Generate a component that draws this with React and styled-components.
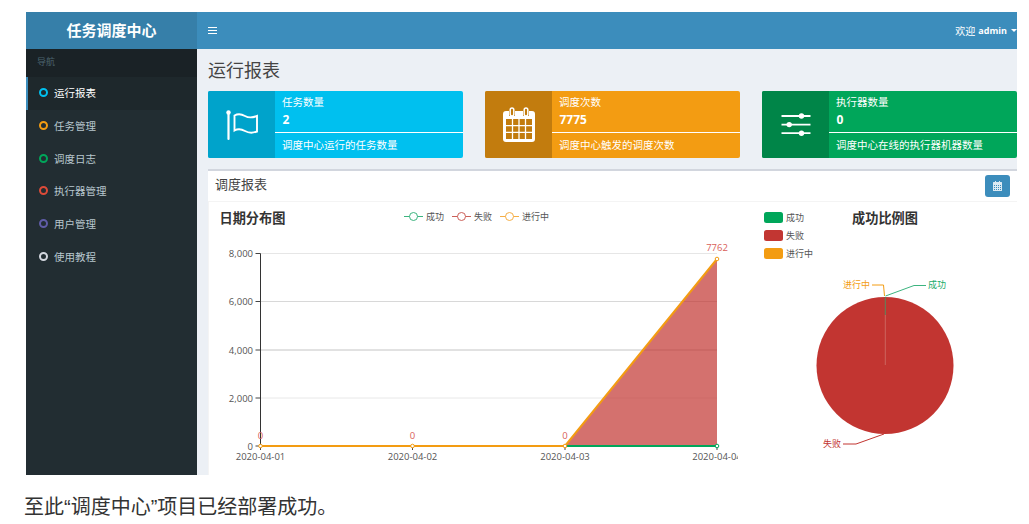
import React from 'react';
import styled, { createGlobalStyle } from 'styled-components';

const GlobalStyle = createGlobalStyle`
  html, body {
    margin: 0;
    padding: 0;
    background: #fff;
  }
  body {
    font-family: "Liberation Sans", "Noto Sans CJK SC", sans-serif;
  }
`;

const navItems = [
  { label: '运行报表', color: '#00c0ef', active: true },
  { label: '任务管理', color: '#f39c12' },
  { label: '调度日志', color: '#00a65a' },
  { label: '执行器管理', color: '#dd4b39' },
  { label: '用户管理', color: '#605ca8' },
  { label: '使用教程', color: '#d2d6de' },
];

const FlagIcon = () => (
  <svg width="36" height="36" viewBox="0 0 36 36" fill="none" stroke="#fff">
    <path d="M4.500 6v26" strokeWidth="2.200" strokeLinecap="round" />
    <circle cx="4.500" cy="5.500" r="2.200" fill="#fff" stroke="none" />
    <path d="M10.500 8.500c3.500-2 7-1.500 10.500 0.500s7 2 12 0v15.500c-5 2-8.500 1.500-12-0.500s-7-2.500-10.500-0.500z" strokeWidth="1.900" />
  </svg>
);

const CalendarIcon = () => (
  <svg width="32" height="36" viewBox="0 0 32 36">
    <path
      fill="#fff"
      fillRule="evenodd"
      d="M3 4h3v5h6V4h8v5h6V4h3a3 3 0 0 1 3 3v25a3 3 0 0 1-3 3H3a3 3 0 0 1-3-3V7a3 3 0 0 1 3-3zM3 12v20h26V12z"
    />
    <rect x="7.200" y="1" width="3.600" height="8" rx="1.800" fill="none" stroke="#fff" strokeWidth="1.500" />
    <rect x="21.200" y="1" width="3.600" height="8" rx="1.800" fill="none" stroke="#fff" strokeWidth="1.500" />
    <path d="M3 18.700h26M3 25.300h26M9.500 12v20M16 12v20M22.500 12v20" stroke="#fff" strokeWidth="1.300" />
  </svg>
);

const SlidersIcon = () => (
  <svg width="30" height="24" viewBox="0 0 30 24" stroke="#fff" fill="#fff">
    <path d="M0.500 3h29M0.500 11.600h29M0.500 20.200h29" strokeWidth="1.800" />
    <circle cx="20.500" cy="3" r="2.700" stroke="none" />
    <circle cx="8.200" cy="11.600" r="2.700" stroke="none" />
    <circle cx="20.500" cy="20.200" r="2.700" stroke="none" />
  </svg>
);

const stats = [
  { title: '任务数量', value: '2', desc: '调度中心运行的任务数量', bg: '#00c0ef', dark: '#00a3cb', icon: <FlagIcon /> },
  { title: '调度次数', value: '7775', desc: '调度中心触发的调度次数', bg: '#f39c12', dark: '#c27c0e', icon: <CalendarIcon /> },
  { title: '执行器数量', value: '0', desc: '调度中心在线的执行器机器数量', bg: '#00a65a', dark: '#008548', icon: <SlidersIcon /> },
];

const gridYs = [
  { y: 253.5, label: '8,000', color: '#e6e6e6' },
  { y: 301.5, label: '6,000', color: '#d8d8d8' },
  { y: 350, label: '4,000', color: '#c4c4c4' },
  { y: 398, label: '2,000', color: '#e8e8e8' },
  { y: 446, label: '0' },
];

const points = [
  { x: 260.5, date: '2020-04-01', val: '0' },
  { x: 412.5, date: '2020-04-02', val: '0' },
  { x: 565, date: '2020-04-03', val: '0' },
  { x: 717, date: '2020-04-04', val: '7762' },
];

const lineLegend = [
  { x: 404, label: '成功', color: '#3cb47f' },
  { x: 452, label: '失败', color: '#cb5f58' },
  { x: 500, label: '进行中', color: '#f5ae45' },
];

const pieLegend = [
  { y: 212, label: '成功', color: '#00a65a' },
  { y: 230, label: '失败', color: '#c23632' },
  { y: 248, label: '进行中', color: '#f39c12' },
];

const LineChart = () => (
  <LeftSvg viewBox="209 202 529 273">
    <ChartTitle x="219.500" y="223">日期分布图</ChartTitle>
    {lineLegend.map((l) => (
      <g key={l.label} stroke={l.color} fill="#fff">
        <path d={`M${l.x} 216.500h19`} />
        <circle cx={l.x + 9.500} cy="216.500" r="4" />
        <AxisText x={l.x + 22} y="219.500" stroke="none">{l.label}</AxisText>
      </g>
    ))}
    {gridYs.map((g) => (
      <g key={g.label}>
        {g.color && <path d={`M260.500 ${g.y}H717`} stroke={g.color} />}
        <path d={`M255.500 ${g.y}H260.500`} stroke="#444" />
        <TickText x="253" y={g.y + 3.500} textAnchor="end">{g.label}</TickText>
      </g>
    ))}
    <path d="M565 446L717 259V446Z" fill="#c23531" fillOpacity="0.7" />
    <path d="M260.500 253.500V450" stroke="#333" />
    <path d="M565 446H717" stroke="#00a65a" strokeWidth="2" />
    <path d="M260.500 446H565L717 259" stroke="#f39c12" strokeWidth="2" fill="none" />
    {points.map((p) => (
      <g key={p.date}>
        <path d={`M${p.x} 446v4`} stroke="#444" />
        <circle cx={p.x} cy={p.val === '0' ? 446 : 259} r="1.800" fill="#fff" stroke="#f39c12" />
        <TickText x={p.x} y="459.500" textAnchor="middle">{p.date}</TickText>
        <ValueText x={p.x} y={p.val === '0' ? 439 : 251}>{p.val}</ValueText>
      </g>
    ))}
    <circle cx="717" cy="446" r="1.800" fill="#fff" stroke="#00a65a" />
  </LeftSvg>
);

const PieChart = () => (
  <RightSvg viewBox="738 202 279 273">
    {pieLegend.map((l) => (
      <g key={l.label}>
        <rect x="764" y={l.y} width="19" height="11" rx="2.500" fill={l.color} />
        <AxisText x="786" y={l.y + 8.500}>{l.label}</AxisText>
      </g>
    ))}
    <ChartTitle x="885" y="223" textAnchor="middle">成功比例图</ChartTitle>
    <circle cx="885" cy="365.500" r="68.500" fill="#c23531" />
    <path d="M885.300 315v50" stroke="#d9a9a0" strokeWidth="0.600" strokeOpacity="0.700" />
    <path d="M885.300 297v18" stroke="#3f9c6a" strokeWidth="0.800" />
    <path d="M885.500 296L914 285.500H926" stroke="#3cb47f" fill="none" />
    <path d="M884.500 296L883.500 285H872" stroke="#f39c12" fill="none" />
    <path d="M884 434L856 444H843" stroke="#c23531" fill="none" />
    <PieLabel x="928" y="288" fill="#22ac6b">成功</PieLabel>
    <PieLabel x="870" y="288" fill="#f39c12" textAnchor="end">进行中</PieLabel>
    <PieLabel x="841" y="447" fill="#c23531" textAnchor="end">失败</PieLabel>
  </RightSvg>
);

export default function App() {
  return (
    <>
      <GlobalStyle />
      <Page>
        <Frame>
          <Sidebar>
            <Logo>任务调度中心</Logo>
            <NavHeader>导航</NavHeader>
            {navItems.map((item) => (
              <NavItem key={item.label} $active={item.active}>
                <NavDot $color={item.color} />
                {item.label}
              </NavItem>
            ))}
          </Sidebar>
          <Main>
            <TopBar>
              <Hamburger>
                <span />
                <span />
                <span />
              </Hamburger>
              <UserMenu>
                欢迎 <b>admin</b>
                <Caret />
              </UserMenu>
            </TopBar>
            <Content>
              <PageTitle>运行报表</PageTitle>
              <StatRow>
                {stats.map((s) => (
                  <StatCard key={s.title} $bg={s.bg}>
                    <StatIcon $bg={s.dark}>{s.icon}</StatIcon>
                    <StatBody>
                      <StatTitle>{s.title}</StatTitle>
                      <StatValue>{s.value}</StatValue>
                      <StatDivider />
                      <StatDesc>{s.desc}</StatDesc>
                    </StatBody>
                  </StatCard>
                ))}
              </StatRow>
              <ReportBox>
                <BoxHeader>
                  <BoxTitle>调度报表</BoxTitle>
                  <DateButton aria-label="日期">
                    <svg width="9" height="10" viewBox="0 0 9 10" fill="#dbeaf3">
                      <path
                        fillRule="evenodd"
                        d="M2 0h1v1h3V0h1v1h1.500A.5.5 0 0 1 9 1.500v8a.5.5 0 0 1-.5.5H.5a.5.5 0 0 1-.5-.5v-8A.5.5 0 0 1 .5 1H2zM1 4v1h1V4zm2 0v1h1V4zm2 0v1h1V4zm2 0v1h1V4zM1 6v1h1V6zm2 0v1h1V6zm2 0v1h1V6zm2 0v1h1V6zM1 8v1h1V8zm2 0v1h1V8zm2 0v1h1V8zm2 0v1h1V8z"
                      />
                    </svg>
                  </DateButton>
                </BoxHeader>
                <ChartRow>
                  <LineChart />
                  <PieChart />
                </ChartRow>
              </ReportBox>
            </Content>
          </Main>
        </Frame>
        <Caption>至此“调度中心”项目已经部署成功。</Caption>
      </Page>
    </>
  );
}

const Page = styled.div`
  width: 1029px;
  height: 524px;
  padding: 12px 12px 0 26px;
  box-sizing: border-box;
  overflow: hidden;
`;

const Frame = styled.div`
  display: flex;
  width: 991px;
  height: 463px;
  overflow: hidden;
`;

const Sidebar = styled.aside`
  width: 171px;
  flex-shrink: 0;
  background: #222d32;
`;

const Logo = styled.div`
  height: 37px;
  line-height: 37px;
  background: #367fa9;
  color: #fff;
  font-size: 15px;
  font-weight: 700;
  text-align: center;
`;

const NavHeader = styled.div`
  height: 28px;
  line-height: 27px;
  padding-left: 11px;
  background: #1a2226;
  color: #4b646f;
  font-size: 9px;
`;

const NavItem = styled.div`
  display: flex;
  align-items: center;
  height: 32.700px;
  padding-bottom: 1px;
  padding-left: ${({ $active }) => ($active ? '11px' : '13px')};
  border-left: ${({ $active }) => ($active ? '2px solid #3c8dbc' : 'none')};
  background: ${({ $active }) => ($active ? '#1e282c' : 'transparent')};
  color: ${({ $active }) => ($active ? '#fff' : '#b8c7ce')};
  font-size: 10.500px;
  box-sizing: border-box;
`;

const NavDot = styled.i`
  width: 9px;
  height: 9px;
  margin-right: 6px;
  border: 2px solid ${({ $color }) => $color};
  border-radius: 50%;
  box-sizing: border-box;
`;

const Main = styled.div`
  flex: 1;
  min-width: 0;
  background: #ecf0f5;
`;

const TopBar = styled.header`
  display: flex;
  align-items: center;
  justify-content: space-between;
  height: 37px;
  padding: 0 0 0 11px;
  background: #3c8dbc;
`;

const Hamburger = styled.div`
  display: flex;
  flex-direction: column;
  gap: 1.700px;
  width: 9px;

  span {
    height: 1.300px;
    background: #fff;
  }
`;

const UserMenu = styled.div`
  display: flex;
  align-items: center;
  gap: 3px;
  color: #fff;
  font-size: 10px;

  b {
    font-family: "Open Sans", sans-serif;
    font-size: 9px;
    font-weight: 700;
  }
`;

const Caret = styled.i`
  width: 0;
  height: 0;
  margin-left: 1px;
  border-top: 3px solid #fff;
  border-left: 3px solid transparent;
  border-right: 3px solid transparent;
`;

const Content = styled.main`
  padding: 0 0 0 11px;
`;

const PageTitle = styled.h1`
  height: 42px;
  margin: 0;
  color: #444;
  font-size: 18px;
  font-weight: 400;
  line-height: 44px;
`;

const StatRow = styled.div`
  display: flex;
  gap: 22px;
`;

const StatCard = styled.div`
  display: flex;
  width: 255px;
  height: 67px;
  background: ${({ $bg }) => $bg};
  border-radius: 2px;
  color: #fff;
  overflow: hidden;
`;

const StatIcon = styled.div`
  display: flex;
  align-items: center;
  justify-content: center;
  width: 67px;
  background: ${({ $bg }) => $bg};
`;

const StatBody = styled.div`
  flex: 1;
  display: flex;
  flex-direction: column;
`;

const StatTitle = styled.div`
  height: 17px;
  margin-top: 3px;
  padding-left: 7px;
  font-size: 10.500px;
  line-height: 17px;
`;

const StatValue = styled.div`
  height: 18px;
  padding-left: 7.500px;
  font-family: "Open Sans", sans-serif;
  font-size: 12px;
  font-weight: 700;
  line-height: 18px;
`;

const StatDivider = styled.div`
  height: 1px;
  margin-top: 3px;
  background: #fff;
`;

const StatDesc = styled.div`
  padding-left: 7px;
  font-size: 10.500px;
  line-height: 24px;
`;

const ReportBox = styled.section`
  width: 809px;
  height: 306px;
  margin-top: 11px;
  background: #fff;
  border-top: 2px solid #d2d6de;
  box-sizing: border-box;
`;

const BoxHeader = styled.div`
  display: flex;
  align-items: center;
  justify-content: space-between;
  height: 30px;
  padding: 0 7px 0 7px;
  border-bottom: 1px solid #f4f4f4;
`;

const BoxTitle = styled.h3`
  margin: 0 0 5px;
  color: #444;
  font-size: 13px;
  font-weight: 400;
`;

const DateButton = styled.button`
  display: flex;
  align-items: center;
  justify-content: center;
  width: 25px;
  height: 22px;
  padding: 0;
  background: #3c8dbc;
  border: none;
  border-radius: 3px;
`;

const ChartRow = styled.div`
  display: flex;
  border-left: 1px solid #f4f4f4;
`;

const LeftSvg = styled.svg`
  display: block;
  width: 529px;
  height: 273px;
  flex-shrink: 0;
`;

const RightSvg = styled.svg`
  display: block;
  width: 279px;
  height: 273px;
  flex-shrink: 0;
`;

const ChartTitle = styled.text`
  fill: #333;
  font-size: 13.200px;
  font-weight: 700;
`;

const AxisText = styled.text`
  fill: #555;
  font-family: "Open Sans", "Noto Sans CJK SC", sans-serif;
  font-size: 9px;
`;

const TickText = styled(AxisText)`
  font-size: 9.500px;
`;

const ValueText = styled.text`
  fill: #d9605a;
  font-family: "Open Sans", sans-serif;
  font-size: 9.500px;
  text-anchor: middle;
`;

const PieLabel = styled.text`
  font-size: 9px;
`;

const Caption = styled.p`
  margin: 20px 0 0 -2px;
  color: #333;
  font-size: 20px;
  line-height: 24px;
`;
